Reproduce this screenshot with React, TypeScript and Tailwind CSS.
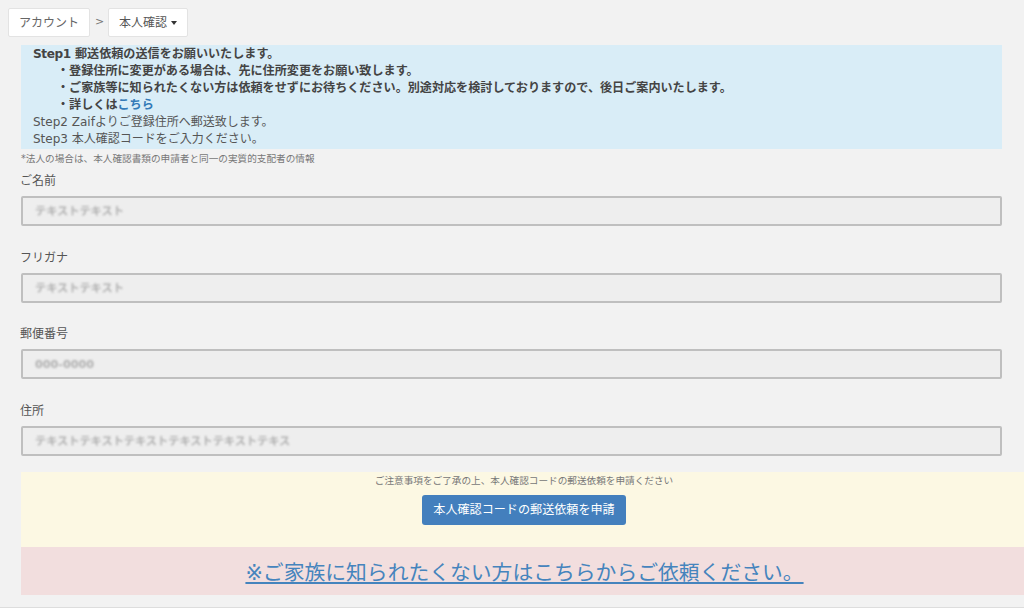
import React from "react";

const font = "[font-family:'DejaVu_Sans','Noto_Sans_CJK_JP',sans-serif]";

function Field({ label, value, mt }: { label: string; value: string; mt: string }) {
  return (
    <div className={mt}>
      <div className="-ml-px h-[17px] text-[12px] leading-[17px] text-[#555]">{label}</div>
      <div className="mt-[6px] flex h-[30px] items-center rounded-[2px] border-2 border-[#bfbfbf] bg-[#eeeeee] pl-[12px] pt-[2px]">
        <span className="text-[11.2px] font-bold leading-none text-[#b0b0b0] blur-[1.2px]">{value}</span>
      </div>
    </div>
  );
}

export default function App() {
  return (
    <div className={`${font} h-[608px] w-[1024px] overflow-hidden border-b border-[#dddddd] bg-[#f2f2f2] text-[#555]`}>
      <div className="flex items-center pl-[8px] pt-[8px]">
        <div className="flex h-[29px] items-center rounded-[2px] border border-[#e3e3e3] bg-white px-[10px] text-[12px] text-[#666]">アカウント</div>
        <span className="mx-[5px] w-[8px] text-[11px] text-[#777]">&gt;</span>
        <div className="flex h-[29px] items-center rounded-[2px] border border-[#e3e3e3] bg-white px-[10px] text-[12px] text-[#555]">
          本人確認
          <span className="ml-[4px] h-0 w-0 border-x-[3.5px] border-t-[4px] border-x-transparent border-t-[#333]" />
        </div>
      </div>
      <div className="pl-[21px]">
        <div className="mr-[22px] mt-[8px]">
          <div className="h-[104px] bg-[#d9edf7] pl-[12px] pt-[0.5px] text-[12px] leading-[17.14px] text-[#555]">
            <div className="text-[12.1px] font-bold text-[#444]">
              <div><span className="tracking-[-0.4px]">Step1</span> 郵送依頼の送信をお願いいたします。</div>
              <div className="pl-[24px]">・登録住所に変更がある場合は、先に住所変更をお願い致します。</div>
              <div className="pl-[24px]">・ご家族等に知られたくない方は依頼をせずにお待ちください。別途対応を検討しておりますので、後日ご案内いたします。</div>
              <div className="pl-[24px]">・詳しくは<a className="text-[#337ab7]">こちら</a></div>
            </div>
            <div>Step2 Zaifよりご登録住所へ郵送致します。</div>
            <div>Step3 本人確認コードをご入力ください。</div>
          </div>
          <div className="mt-[3px] h-[13px] text-[9.65px] leading-[13px] text-[#777]">*法人の場合は、本人確認書類の申請者と同一の実質的支配者の情報</div>
          <Field mt="mt-[8px]" label="ご名前" value="テキストテキスト" />
          <Field mt="mt-[24px]" label="フリガナ" value="テキストテキスト" />
          <Field mt="mt-[23px]" label="郵便番号" value="000-0000" />
          <Field mt="mt-[24px]" label="住所" value="テキストテキストテキストテキストテキストテキス" />
        </div>
        <div className="mt-[16px] flex h-[75px] flex-col items-center bg-[#fcf8e3] pl-[3px] pt-[2px]">
          <div className="h-[13px] text-[9.65px] leading-[13px] text-[#777]">ご注意事項をご了承の上、本人確認コードの郵送依頼を申請ください</div>
          <button className="mt-[8px] h-[30px] rounded-[3px] bg-[#437fbd] px-[11px] text-[12.1px] text-white">本人確認コードの郵送依頼を申請</button>
        </div>
        <div className="flex h-[48px] items-center justify-center bg-[#f2dede] pl-[4px] pt-[5px]">
          <a className="text-[20.8px] text-[#4584bd] underline">※ご家族に知られたくない方はこちらからご依頼ください。</a>
        </div>
      </div>
    </div>
  );
}
